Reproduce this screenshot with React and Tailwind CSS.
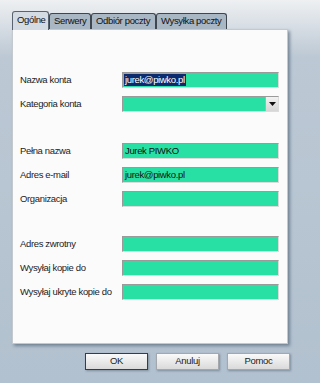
import React from "react";

const font = { fontFamily: '"Liberation Sans", Arial, sans-serif' };

const tabs = [
  { label: "Ogólne", w: "w-[37px]", active: true },
  { label: "Serwery", w: "w-[42px]" },
  { label: "Odbiór poczty", w: "w-[65px]" },
  { label: "Wysyłka poczty", w: "w-[71px]" },
];

const Field = ({ label, value, selected, combo }) => (
  <div className="flex items-center h-4">
    <div className="w-[102px] text-[9.5px] tracking-[-0.35px] text-[#1c1c1c] leading-none">
      {label}
    </div>
    <div className="relative w-[157px] h-4 bg-[#28e0a4] border border-t-[#9a9a9a] border-l-[#9a9a9a] border-b-[#dcdcdc] border-r-[#dcdcdc] flex items-center">
      {value && (
        <span
          className={
            "ml-px px-px text-[9.5px] tracking-[-0.35px] leading-[12px] " +
            (selected ? "bg-[#0c2a6e] text-white" : "text-[#101010]")
          }
        >
          {value}
        </span>
      )}
      {combo && (
        <div className="absolute right-0 top-0 bottom-0 w-[13px] bg-gradient-to-b from-[#f2f2f2] to-[#d6d6d6] border-l border-[#b0b0b0] flex items-center justify-center">
          <svg width="7" height="4" viewBox="0 0 7 4">
            <path d="M0 0h7L3.5 4z" fill="#111" />
          </svg>
        </div>
      )}
    </div>
  </div>
);

const Button = ({ label, primary }) => (
  <button
    className={
      "w-[63px] h-[17px] text-[9.5px] tracking-[-0.3px] text-[#1c1c1c] bg-gradient-to-b from-[#fafafa] to-[#dadada] shadow-[1px_1px_2px_rgba(60,80,100,0.45)] " +
      (primary ? "border border-[#3c3c3c]" : "border border-[#a4a8ac]")
    }
  >
    {label}
  </button>
);

const App = () => {
  return (
    <div
      style={font}
      className="w-full min-w-[300px] h-[383px] overflow-hidden bg-gradient-to-b from-[#eef0f2] via-[#bcc8d4] via-15% to-[#b2c1cf] pt-[11px] pl-[12px]"
    >
      {/* tabs */}
      <div className="flex items-end h-[18px] relative z-10">
        {tabs.map((t) =>
          t.active ? (
            <div
              key={t.label}
              className={`${t.w} h-[19px] -mb-px bg-[#d4dbe2] border border-b-0 border-[#5a6470] rounded-t-[3px] text-[9.5px] tracking-[-0.35px] text-[#111] flex items-center pl-[4px] pb-px`}
            >
              {t.label}
            </div>
          ) : (
            <div
              key={t.label}
              className={`${t.w} h-[16px] bg-[#a9b6c3] border border-b-0 border-[#3e4650] rounded-t-[3px] text-[9.5px] tracking-[-0.35px] text-[#111] flex items-center pl-[4px]`}
            >
              {t.label}
            </div>
          )
        )}
      </div>

      {/* panel */}
      <div className="w-[276px] h-[315px] bg-[#fbfbfb] border border-[#c4c9ce] shadow-[2px_2px_3px_rgba(60,80,100,0.55)] pt-[42px] pl-[7px]">
        <div className="flex flex-col gap-2">
          <Field label="Nazwa konta" value="jurek@piwko.pl" selected />
          <Field label="Kategoria konta" combo />
        </div>
        <div className="flex flex-col gap-2 mt-[31px]">
          <Field label="Pełna nazwa" value="Jurek PIWKO" />
          <Field label="Adres e-mail" value="jurek@piwko.pl" />
          <Field label="Organizacja" />
        </div>
        <div className="flex flex-col gap-2 mt-[29px]">
          <Field label="Adres zwrotny" />
          <Field label="Wysyłaj kopie do" />
          <Field label="Wysyłaj ukryte kopie do" />
        </div>
      </div>

      {/* buttons */}
      <div className="flex justify-start gap-2 mt-[9px] pl-[73px]">
        <Button label="OK" primary />
        <Button label="Anuluj" />
        <Button label="Pomoc" />
      </div>
    </div>
  );
};

export default App;
